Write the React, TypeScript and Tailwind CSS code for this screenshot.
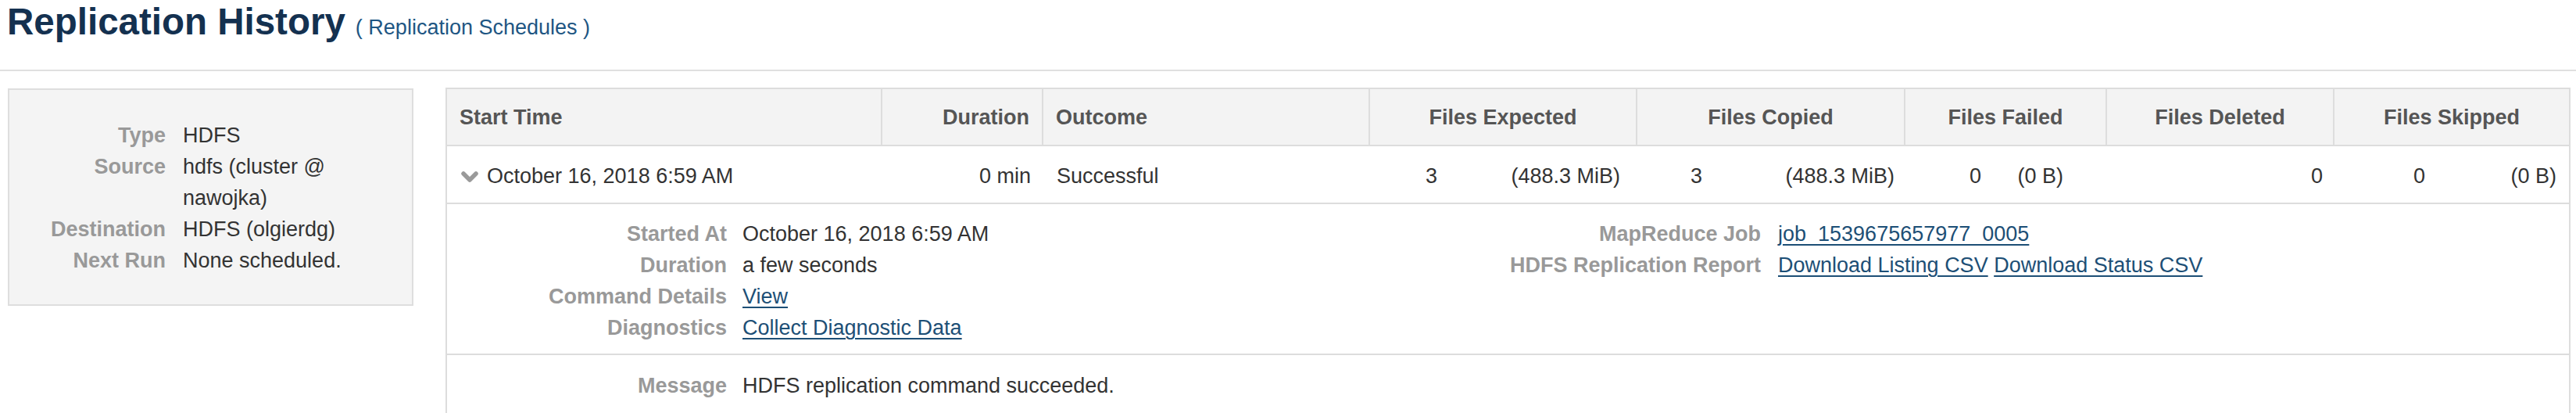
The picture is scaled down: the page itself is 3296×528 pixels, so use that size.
import React from "react";

const cols =
  "grid grid-cols-[557px_206px_418px_102px_240px_99px_244px_113px_145px_291px_132px_168px]";

function Chevron() {
  return (
    <svg width="22" height="14" viewBox="0 0 22 14" className="shrink-0">
      <polyline
        points="3,3 11,11 19,3"
        fill="none"
        stroke="#9a9a9a"
        strokeWidth="5.5"
        strokeLinecap="round"
        strokeLinejoin="round"
      />
    </svg>
  );
}

function DetailRow({ label, children }: { label: string; children: React.ReactNode }) {
  return (
    <>
      <div className="text-right font-bold text-[#999999] whitespace-nowrap">{label}</div>
      <div className="text-[#333333] whitespace-nowrap">{children}</div>
    </>
  );
}

function Link({ children }: { children: React.ReactNode }) {
  return <a className="text-[#1d4f76] underline decoration-[2px] underline-offset-[4px] cursor-pointer">{children}</a>;
}

export default function App() {
  return (
    <div className="w-[3296px] h-[528px] overflow-hidden bg-white font-['Liberation_Sans',Arial,sans-serif] text-[27px] text-[#333333]">
      {/* Title */}
      <div className="h-[91px] border-b-2 border-[#e0e0e0] pl-[9px] pt-[4px] flex items-baseline gap-[13px]">
        <h1 className="text-[47.5px] leading-[47px] font-bold text-[#143150]">Replication History</h1>
        <a className="text-[27px] text-[#1e5683] cursor-pointer">( Replication Schedules )</a>
      </div>

      {/* Body */}
      <div className="flex items-start gap-[41px] pt-[21px] pl-[10px] pr-[7px]">
        {/* Left summary panel */}
        <div className="w-[519px] h-[278px] mt-[1px] shrink-0 border-2 border-[#dedede] bg-[#f4f4f4] pt-[38px]">
          <div className="grid grid-cols-[200px_260px] gap-x-[22px] leading-[40px]">
            <div className="text-right font-bold text-[#999999]">Type</div>
            <div>HDFS</div>
            <div className="text-right font-bold text-[#999999]">Source</div>
            <div>hdfs (cluster @ nawojka)</div>
            <div className="text-right font-bold text-[#999999]">Destination</div>
            <div>HDFS (olgierdg)</div>
            <div className="text-right font-bold text-[#999999]">Next Run</div>
            <div>None scheduled.</div>
          </div>
        </div>

        {/* Table */}
        <div className="flex-1 border-2 border-[#dddddd]">
          {/* Header */}
          <div className={`${cols} h-[73px] bg-[#f3f3f3] border-b-2 border-[#dddddd] font-bold text-[#555555]`}>
            <div className="border-r-2 border-[#dddddd] flex items-center px-[16px] pt-[2px]">Start Time</div>
            <div className="border-r-2 border-[#dddddd] flex items-center justify-end px-[16px] pt-[2px]">Duration</div>
            <div className="border-r-2 border-[#dddddd] flex items-center px-[16px] pt-[2px]">Outcome</div>
            <div className="col-span-2 border-r-2 border-[#dddddd] flex items-center justify-center px-[16px] pt-[2px]">Files Expected</div>
            <div className="col-span-2 border-r-2 border-[#dddddd] flex items-center justify-center px-[16px] pt-[2px]">Files Copied</div>
            <div className="col-span-2 border-r-2 border-[#dddddd] flex items-center justify-center px-[16px] pt-[2px]">Files Failed</div>
            <div className="border-r-2 border-[#dddddd] flex items-center justify-center px-[16px] pt-[2px]">Files Deleted</div>
            <div className="col-span-2 flex items-center justify-center px-[16px] pt-[2px]">Files Skipped</div>
          </div>

          {/* Data row */}
          <div className={`${cols} h-[74px] border-b-2 border-[#dddddd] items-center pt-[5px]`}>
            <div className="flex items-center gap-[11px] pl-[18px]">
              <Chevron />
              <span>October 16, 2018 6:59 AM</span>
            </div>
            <div className="text-right pr-[16px]">0 min</div>
            <div className="pl-[17px]">Successful</div>
            <div className="text-right pr-[16px]">3</div>
            <div className="text-right pr-[22px]">(488.3 MiB)</div>
            <div className="text-right pr-[16px]">3</div>
            <div className="text-right pr-[14px]">(488.3 MiB)</div>
            <div className="text-right pr-[16px]">0</div>
            <div className="text-right pr-[56px]">(0 B)</div>
            <div className="text-right pr-[15px]">0</div>
            <div className="text-right pr-[16px]">0</div>
            <div className="text-right pr-[16px]">(0 B)</div>
          </div>

          {/* Details */}
          <div className="grid grid-cols-[1321px_1fr] border-b-2 border-[#dddddd] pt-[18px] pb-[13px] leading-[40px]">
            <div className="grid grid-cols-[358px_1fr] gap-x-[20px] content-start">
              <DetailRow label="Started At">October 16, 2018 6:59 AM</DetailRow>
              <DetailRow label="Duration">a few seconds</DetailRow>
              <DetailRow label="Command Details">
                <Link>View</Link>
              </DetailRow>
              <DetailRow label="Diagnostics">
                <Link>Collect Diagnostic Data</Link>
              </DetailRow>
            </div>
            <div className="grid grid-cols-[360px_1fr] gap-x-[22px] content-start">
              <DetailRow label="MapReduce Job">
                <Link>job_1539675657977_0005</Link>
              </DetailRow>
              <DetailRow label="HDFS Replication Report">
                <Link>Download Listing CSV</Link> <Link>Download Status CSV</Link>
              </DetailRow>
            </div>
          </div>

          {/* Message */}
          <div className="grid grid-cols-[358px_1fr] gap-x-[20px] pt-[19px] pb-[19px] leading-[40px]">
            <DetailRow label="Message">HDFS replication command succeeded.</DetailRow>
          </div>
        </div>
      </div>
    </div>
  );
}
